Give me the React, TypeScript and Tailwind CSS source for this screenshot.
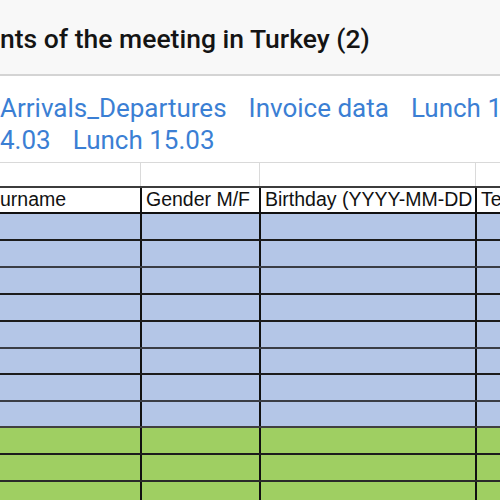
const cols = ["w-[142px]", "w-[119px]", "w-[216px]", "flex-1"];
const blankCols = ["w-[141px]", "w-[119px]", "w-[216px]", "flex-1"];

const rows: { bg: string; h: string; line: string }[] = [
  { bg: "bg-[#b4c6e7]", h: "h-[27px]", line: "border-[#1c1c1c]" },
  { bg: "bg-[#b4c6e7]", h: "h-[27px]", line: "border-[#3a3d45]" },
  { bg: "bg-[#b4c6e7]", h: "h-[27px]", line: "border-[#1c1c1c]" },
  { bg: "bg-[#b4c6e7]", h: "h-[27px]", line: "border-[#1c1c1c]" },
  { bg: "bg-[#b4c6e7]", h: "h-[27px]", line: "border-[#3a3d45]" },
  { bg: "bg-[#b4c6e7]", h: "h-[26px]", line: "border-[#1c1c1c]" },
  { bg: "bg-[#b4c6e7]", h: "h-[27px]", line: "border-[#3a3d45]" },
  { bg: "bg-[#b4c6e7]", h: "h-[26px]", line: "border-[#404040]" },
  { bg: "bg-[#9fcf62]", h: "h-[27px]", line: "border-[#1c1c1c]" },
  { bg: "bg-[#9fcf62]", h: "h-[27px]", line: "border-[#2a2a2a]" },
  { bg: "bg-[#9fcf62]", h: "h-[27px]", line: "border-[#1c1c1c]" },
];

const headers = ["urname", "Gender M/F", "Birthday (YYYY-MM-DD", "Te"];

export default function App() {
  return (
    <div className="w-[500px] h-[500px] overflow-hidden bg-white">
      <div className="h-[76px] bg-[#f8f8f8] flex items-center pt-[4px] border-b-2 border-[#d4d4d4]">
        <h1 className="whitespace-nowrap text-[26.5px] font-medium text-[#141414] font-['Roboto',sans-serif]">
          nts of the meeting in Turkey (2)
        </h1>
      </div>

      <div className="h-[87px] pt-[16px] overflow-hidden text-[26px] leading-[32px] text-[#3b7fd4] font-['Roboto',sans-serif] border-b border-[#d9d9d9]">
        <div className="flex gap-[22px] whitespace-nowrap">
          <span>Arrivals_Departures</span>
          <span>Invoice data</span>
          <span>Lunch 14.03</span>
        </div>
        <div className="flex gap-[22px] whitespace-nowrap">
          <span>4.03</span>
          <span>Lunch 15.03</span>
        </div>
      </div>

      <div className="flex h-[23px]">
        {blankCols.map((c, i) => (
          <div key={i} className={`${c} ${i < 3 ? "border-r border-[#dadada]" : ""}`} />
        ))}
      </div>

      <div className="flex h-[28px] border-y-2 border-t-[#3c3c3c] border-b-[#111] text-[19.5px] font-['Liberation_Sans',Arial,sans-serif] text-[#111]">
        {headers.map((t, i) => (
          <div
            key={i}
            className={`${cols[i]} ${i < 3 ? "border-r-2 border-[#111]" : ""} ${i === 0 ? "pl-0" : "pl-[4px]"} flex items-center overflow-hidden whitespace-nowrap`}
          >
            {t}
          </div>
        ))}
      </div>

      {rows.map((r, ri) => (
        <div key={ri} className={`flex ${r.h} ${r.bg} border-b-2 ${r.line}`}>
          {cols.map((c, i) => (
            <div key={i} className={`${c} ${i < 3 ? "border-r-2 border-[#111]" : ""}`} />
          ))}
        </div>
      ))}
    </div>
  );
}
